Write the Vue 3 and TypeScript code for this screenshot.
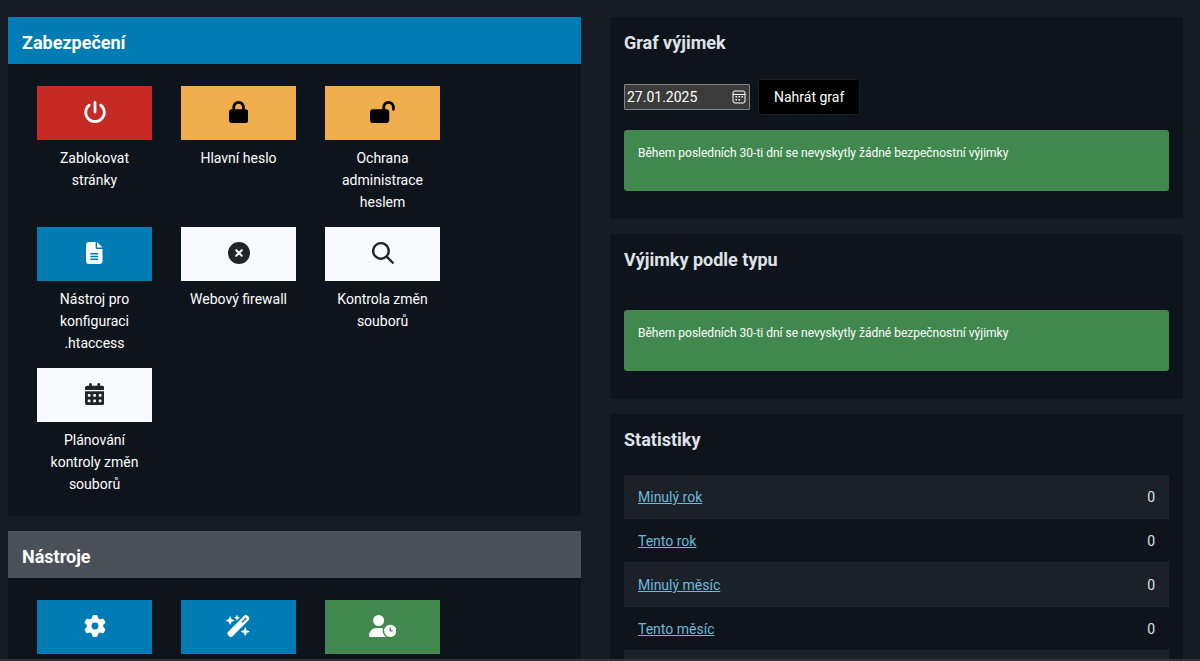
<script setup lang="ts">
import { ref } from 'vue'

interface Icon {
  width: number
  path: string
}

interface Tile {
  name: string
  label?: string
  tone: 'danger' | 'warning' | 'primary' | 'light' | 'success'
  icon: string
}

const icons: Record<string, Icon> = {
  power: {
    width: 512,
    path: 'M288 32c0-17.700-14.300-32-32-32s-32 14.300-32 32V256c0 17.700 14.300 32 32 32s32-14.300 32-32V32zM143.500 120.600c13.600-11.300 15.400-31.500 4.100-45.100s-31.500-15.400-45.100-4.100C49.700 115.400 6 181.800 6 260c0 138 112 250 250 250s250-112 250-250c0-78.200-43.800-144.600-96.600-188.600c-13.600-11.300-33.800-9.400-45.100 4.100s-9.400 33.800 4.100 45.100c38.900 32.300 71.500 81 71.500 139.400c0 101.600-82.400 184-184 184s-184-82.400-184-184c0-58.400 32.700-107.100 71.500-139.400z',
  },
  lock: {
    width: 448,
    path: 'M144 144v48H304V144c0-44.2-35.8-80-80-80s-80 35.8-80 80zM80 192V144C80 64.5 144.5 0 224 0s144 64.5 144 144v48h16c35.3 0 64 28.7 64 64V448c0 35.3-28.7 64-64 64H64c-35.3 0-64-28.7-64-64V256c0-35.3 28.7-64 64-64H80z',
  },
  unlock: {
    width: 576,
    path: 'M352 144c0-44.2 35.8-80 80-80s80 35.8 80 80v48c0 17.7 14.3 32 32 32s32-14.3 32-32V144C576 64.5 511.5 0 432 0S288 64.5 288 144v48H64c-35.3 0-64 28.7-64 64V448c0 35.3 28.7 64 64 64H384c35.3 0 64-28.7 64-64V256c0-35.3-28.7-64-64-64H352V144z',
  },
  file: {
    width: 384,
    path: 'M64 0C28.7 0 0 28.7 0 64V448c0 35.3 28.7 64 64 64H320c35.3 0 64-28.7 64-64V160H256c-17.7 0-32-14.3-32-32V0H64zM256 0V128H384L256 0zM112 256H272c8.8 0 16 7.2 16 16s-7.2 16-16 16H112c-8.8 0-16-7.2-16-16s7.2-16 16-16zm0 64H272c8.800 0 16 7.200 16 16s-7.200 16-16 16H112c-8.800 0-16-7.200-16-16s7.200-16 16-16zm0 64H272c8.800 0 16 7.200 16 16s-7.200 16-16 16H112c-8.800 0-16-7.200-16-16s7.200-16 16-16z',
  },
  cross: {
    width: 512,
    path: 'M256 512A256 256 0 1 0 256 0a256 256 0 1 0 0 512zM175 175c9.4-9.4 24.6-9.4 33.9 0l47 47 47-47c9.4-9.4 24.6-9.4 33.9 0s9.4 24.6 0 33.9l-47 47 47 47c9.4 9.4 9.4 24.6 0 33.9s-24.6 9.4-33.9 0l-47-47-47 47c-9.4 9.4-24.6 9.4-33.9 0s-9.4-24.6 0-33.9l47-47-47-47c-9.4-9.4-9.4-24.6 0-33.9z',
  },
  search: {
    width: 512,
    path: 'M208 0a208 208 0 1 0 126 373l130 130c11 11 28 11 39 0s11-28 0-39L373 334A208 208 0 0 0 208 0zM208 55a153 153 0 1 1 0 306a153 153 0 1 1 0-306z',
  },
  calendar: {
    width: 448,
    path: 'M128 0c17.7 0 32 14.3 32 32V64H288V32c0-17.7 14.3-32 32-32s32 14.3 32 32V64h48c26.5 0 48 21.5 48 48v48H0V112C0 85.5 21.5 64 48 64H96V32c0-17.7 14.3-32 32-32zM0 192H448V464c0 26.5-21.5 48-48 48H48c-26.5 0-48-21.5-48-48V192zm64 80v32c0 8.8 7.2 16 16 16h32c8.8 0 16-7.2 16-16V272c0-8.8-7.2-16-16-16H80c-8.8 0-16 7.2-16 16zm128 0v32c0 8.8 7.2 16 16 16h32c8.8 0 16-7.2 16-16V272c0-8.8-7.2-16-16-16H208c-8.8 0-16 7.2-16 16zm144-16c-8.8 0-16 7.2-16 16v32c0 8.8 7.2 16 16 16h32c8.8 0 16-7.2 16-16V272c0-8.8-7.2-16-16-16H336zM64 400v32c0 8.8 7.2 16 16 16h32c8.8 0 16-7.2 16-16V400c0-8.8-7.2-16-16-16H80c-8.8 0-16 7.2-16 16zm144-16c-8.8 0-16 7.2-16 16v32c0 8.8 7.2 16 16 16h32c8.8 0 16-7.2 16-16V400c0-8.8-7.2-16-16-16H208zm112 16v32c0 8.8 7.2 16 16 16h32c8.8 0 16-7.2 16-16V400c0-8.8-7.2-16-16-16H336c-8.8 0-16 7.2-16 16z',
  },
  gear: {
    width: 512,
    path: 'M495.9 166.6c3.2 8.7 .5 18.4-6.4 24.6l-43.3 39.4c1.1 8.3 1.7 16.8 1.7 25.4s-.6 17.1-1.7 25.4l43.3 39.4c6.9 6.2 9.6 15.9 6.4 24.6c-4.4 11.9-9.7 23.3-15.8 34.3l-4.7 8.1c-6.6 11-14 21.4-22.1 31.2c-5.9 7.2-15.7 9.6-24.5 6.8l-55.7-17.7c-13.4 10.3-28.2 18.9-44 25.4l-12.5 57.1c-2 9.1-9 16.3-18.2 17.8c-13.8 2.3-28 3.5-42.5 3.5s-28.7-1.2-42.5-3.5c-9.2-1.5-16.2-8.7-18.2-17.8l-12.5-57.1c-15.8-6.5-30.6-15.1-44-25.4L83.1 425.9c-8.8 2.8-18.6 .3-24.5-6.8c-8.1-9.8-15.5-20.2-22.1-31.2l-4.7-8.1c-6.1-11-11.4-22.4-15.8-34.3c-3.2-8.7-.5-18.4 6.4-24.6l43.3-39.4C64.6 273.1 64 264.6 64 256s.6-17.1 1.7-25.4L22.4 191.2c-6.9-6.2-9.6-15.9-6.4-24.6c4.4-11.9 9.7-23.3 15.8-34.3l4.7-8.1c6.6-11 14-21.4 22.1-31.2c5.9-7.2 15.7-9.6 24.5-6.8l55.7 17.7c13.4-10.3 28.2-18.9 44-25.4l12.5-57.1c2-9.1 9-16.3 18.2-17.8C227.3 1.2 241.5 0 256 0s28.7 1.2 42.5 3.5c9.2 1.5 16.2 8.7 18.2 17.8l12.5 57.1c15.8 6.5 30.6 15.1 44 25.4l55.7-17.7c8.8-2.8 18.6-.3 24.5 6.8c8.1 9.8 15.5 20.2 22.1 31.2l4.7 8.1c6.1 11 11.4 22.4 15.8 34.3zM256 336a80 80 0 1 0 0-160 80 80 0 1 0 0 160z',
  },
  wand: {
    width: 576,
    path: 'M234.7 42.7L197 56.8c-3 1.1-5 4-5 7.2s2 6.1 5 7.2l37.7 14.1L248.8 123c1.1 3 4 5 7.2 5s6.1-2 7.2-5l14.1-37.7L315 71.2c3-1.1 5-4 5-7.2s-2-6.1-5-7.2L277.3 42.7 263.2 5c-1.1-3-4-5-7.2-5s-6.1 2-7.2 5L234.7 42.7zM46.1 395.4c-18.7 18.7-18.7 49.1 0 67.9l34.6 34.6c18.7 18.7 49.1 18.7 67.9 0L529.9 116.5c18.7-18.7 18.7-49.1 0-67.9L495.3 14.1c-18.7-18.7-49.1-18.7-67.9 0L46.1 395.4zM484.6 82.6l-105 105-23.3-23.3 105-105 23.3 23.3zM7.5 117.2C3 118.9 0 123.2 0 128s3 9.1 7.5 10.8L64 160l21.2 56.5c1.7 4.5 6 7.5 10.8 7.5s9.1-3 10.8-7.5L128 160l56.5-21.2c4.5-1.7 7.5-6 7.5-10.8s-3-9.1-7.5-10.8L128 96 106.8 39.5C105.1 35 100.8 32 96 32s-9.1 3-10.8 7.5L64 96 7.5 117.2zm352 256c-4.5 1.7-7.5 6-7.5 10.8s3 9.1 7.5 10.8L416 416l21.2 56.5c1.7 4.5 6 7.5 10.8 7.5s9.1-3 10.8-7.5L480 416l56.5-21.2c4.5-1.7 7.5-6 7.5-10.8s-3-9.1-7.5-10.8L480 352l-21.2-56.5c-1.7-4.5-6-7.5-10.8-7.5s-9.1 3-10.8 7.5L416 352l-56.5 21.2z',
  },
  userClock: {
    width: 640,
    path: 'M224 0a128 128 0 1 1 0 256a128 128 0 1 1 0-256zM0 482.300C0 383.800 79.800 304 178.300 304h91.400c20.600 0 40.400 3.500 58.800 9.900C323 331 320 349.100 320 368c0 59.500 29.500 112.100 74.800 144H29.700C13.300 512 0 498.700 0 482.300zM496 224a144 144 0 1 1 0 288a144 144 0 1 1 0-288zm0 64c-8.800 0-16 7.200-16 16v80h64c8.800 0 16-7.200 16-16s-7.200-16-16-16h-32v-48c0-8.800-7.200-16-16-16z',
  },
}

const sections: { title: string; id: string; tiles: Tile[] }[] = [
  {
    title: 'Zabezpečení',
    id: 'security',
    tiles: [
      { name: 'block', label: 'Zablokovat stránky', tone: 'danger', icon: 'power' },
      { name: 'password', label: 'Hlavní heslo', tone: 'warning', icon: 'lock' },
      { name: 'admin', label: 'Ochrana administrace heslem', tone: 'warning', icon: 'unlock' },
      { name: 'htaccess', label: 'Nástroj pro konfiguraci .htaccess', tone: 'primary', icon: 'file' },
      { name: 'firewall', label: 'Webový firewall', tone: 'light', icon: 'cross' },
      { name: 'scanner', label: 'Kontrola změn souborů', tone: 'light', icon: 'search' },
      { name: 'schedule', label: 'Plánování kontroly změn souborů', tone: 'light', icon: 'calendar' },
    ],
  },
  {
    title: 'Nástroje',
    id: 'tools',
    tiles: [
      { name: 'settings', tone: 'primary', icon: 'gear' },
      { name: 'wizard', tone: 'primary', icon: 'wand' },
      { name: 'users', tone: 'success', icon: 'userClock' },
    ],
  },
]

const stats: { label: string; count: number | string }[] = [
  { label: 'Minulý rok', count: 0 },
  { label: 'Tento rok', count: 0 },
  { label: 'Minulý měsíc', count: 0 },
  { label: 'Tento měsíc', count: 0 },
  { label: '', count: '' },
]

const fromDate = ref('27.01.2025')
const emptyMessage = 'Během posledních 30-ti dní se nevyskytly žádné bezpečnostní výjimky'
</script>

<template>
  <main class="page">
    <div class="column">
      <section v-for="section in sections" :key="section.id" class="card">
        <h2 class="card-title filled" :class="section.id">{{ section.title }}</h2>
        <nav class="tiles" :aria-label="section.title">
          <a v-for="tile in section.tiles" :key="tile.name" class="tile" href="#" :aria-label="tile.label ?? tile.name">
            <span class="tile-icon" :class="tile.tone">
              <svg :viewBox="`0 0 ${icons[tile.icon].width} 512`" aria-hidden="true">
                <path :d="icons[tile.icon].path" fill="currentColor" fill-rule="evenodd" />
              </svg>
            </span>
            <span v-if="tile.label" class="tile-label">{{ tile.label }}</span>
          </a>
        </nav>
      </section>
    </div>

    <div class="column">
      <section class="card">
        <h2 class="card-title">Graf výjimek</h2>
        <div class="card-body graph">
          <form class="date-form" @submit.prevent>
            <div class="date-field">
              <input v-model="fromDate" class="date-input" type="text" aria-label="Datum od" />
              <button class="date-picker" type="button" aria-label="Vybrat datum">
                <svg viewBox="0 0 14 14" aria-hidden="true">
                  <rect x="1" y="1" width="12" height="12" rx="2" fill="none" stroke="currentColor" />
                  <path d="M1 4.500H13" stroke="currentColor" />
                  <path d="M6.500 6H8v1.500H6.500zM9.500 6H11v1.500H9.500zM3.500 6H5v1.500H3.500zM3.500 9H5v1.500H3.500zM6.500 9H8v1.500H6.500z" fill="currentColor" />
                </svg>
              </button>
            </div>
            <button class="load" type="submit">Nahrát graf</button>
          </form>
          <p class="alert">{{ emptyMessage }}</p>
        </div>
      </section>

      <section class="card">
        <h2 class="card-title">Výjimky podle typu</h2>
        <div class="card-body types">
          <p class="alert">{{ emptyMessage }}</p>
        </div>
      </section>

      <section class="card">
        <h2 class="card-title">Statistiky</h2>
        <div class="card-body">
          <table class="stats">
            <tbody>
              <tr v-for="row in stats" :key="row.label">
                <th scope="row"><a v-if="row.label" href="#">{{ row.label }}</a></th>
                <td>{{ row.count }}</td>
              </tr>
            </tbody>
          </table>
        </div>
      </section>
    </div>
  </main>
</template>

<style>
body {
  margin: 0;
  background: #171b23;
}
</style>

<style scoped>
.page {
  box-sizing: border-box;
  height: 100vh;
  overflow: hidden;
  display: grid;
  grid-template-columns: 1fr 1fr;
  gap: 29px;
  padding: 17px 17px 0 8px;
  border-bottom: 2px solid #333337;
  background: #171b23;
  color: #dfe3e7;
  font-family: Roboto, "Liberation Sans", sans-serif;
  font-size: 14px;
  line-height: 22px;
}

.column {
  display: flex;
  flex-direction: column;
  gap: 15px;
  min-width: 0;
}

.card {
  flex: none;
  background: #0e141b;
  border-radius: 3px;
}

.card-title {
  margin: 0;
  padding: 15px 14px 10px;
  font-size: 18px;
  line-height: 22px;
  font-weight: 700;
}

.filled {
  color: #fff;
}

.security {
  background: #007cb4;
}

.tools {
  background: #495057;
}

.tiles {
  display: flex;
  flex-wrap: wrap;
  gap: 14px 29px;
  padding: 22px 29px 21px;
}

.tile {
  width: 115px;
  color: #fff;
  text-align: center;
  text-decoration: none;
}

.tile-icon {
  display: flex;
  align-items: center;
  justify-content: center;
  box-sizing: border-box;
  height: 54px;
  padding-bottom: 2px;
  margin-bottom: 7px;
}

.tile-icon svg {
  height: 22px;
}

.tile-label {
  display: block;
  padding: 0 7px;
}

.danger {
  background: #c52a25;
}

.warning {
  background: #f0ad4e;
  color: #000;
}

.primary {
  background: #007cb4;
}

.light {
  background: #f9fafd;
  color: #212529;
}

.success {
  background: #41884f;
}

.card-body {
  padding: 14px 14px 28px;
}

.graph {
  padding-top: 15px;
}

.types {
  padding-top: 29px;
}

.date-form {
  display: flex;
  align-items: center;
  gap: 8px;
  margin-bottom: 15px;
}

.date-field {
  display: flex;
  align-items: center;
  box-sizing: border-box;
  width: 126px;
  height: 26px;
  padding: 0 3px 0 2px;
  border: 1px solid #858585;
  border-radius: 1px;
  background: #3b3b3b;
  color: #fff;
}

.date-input {
  flex: 1;
  min-width: 0;
  padding: 0;
  border: 0;
  background: none;
  color: inherit;
  font: inherit;
}

.date-picker {
  display: flex;
  padding: 0;
  border: 0;
  background: none;
  color: inherit;
}

.date-picker svg {
  width: 14px;
  height: 14px;
}

.load {
  height: 36px;
  padding: 0 15px;
  border: 1px solid #1b2026;
  border-radius: 3px;
  background: #000;
  color: #fff;
  font: inherit;
}

.alert {
  margin: 0;
  padding: 12px 14px 27px;
  border-radius: 3px;
  background: #41884f;
  color: #fff;
  font-size: 12px;
}

.stats {
  width: 100%;
  border-collapse: separate;
  border-spacing: 0;
}

.stats th,
.stats td {
  height: 22px;
  padding: 11px 14px 10px;
  border-bottom: 1px solid #20262d;
  font-weight: 400;
  text-align: left;
}

.stats td {
  text-align: right;
}

.stats tr:nth-child(odd) > * {
  background: #1b2128;
}

.stats a {
  color: #6cb9d8;
}
</style>
